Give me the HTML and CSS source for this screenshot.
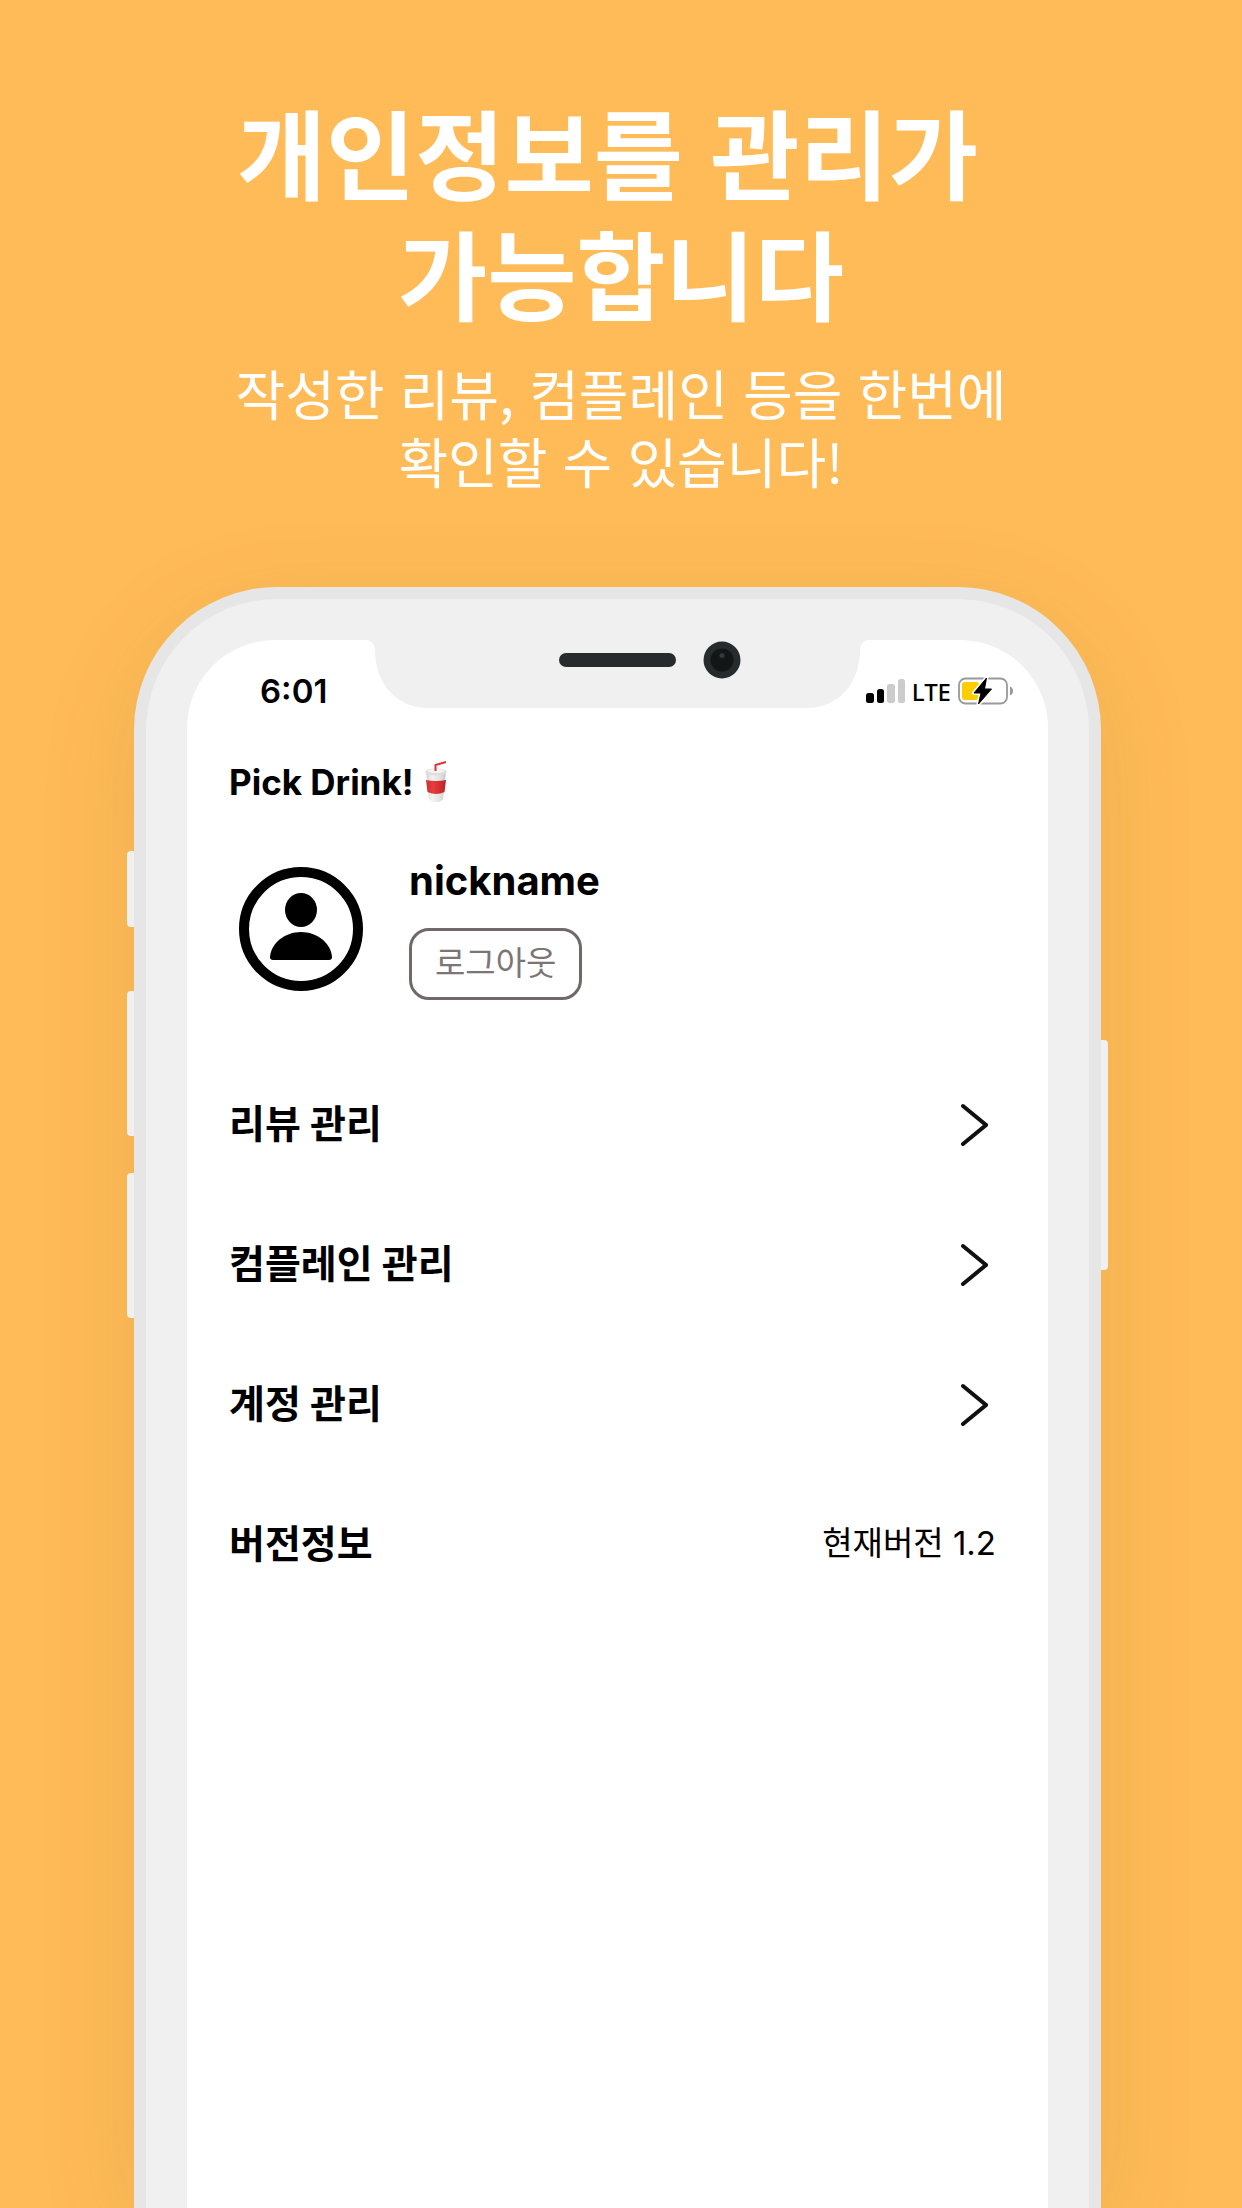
FILE: index.html
```html
<!DOCTYPE html>
<html lang="ko">
<head>
<meta charset="utf-8">
<meta name="viewport" content="width=device-width, initial-scale=1">
<title>Pick Drink!</title>
<link rel="stylesheet" href="styles.css">
</head>
<body>
<header class="promo">
  <h1 class="promo-title">개인정보를 관리가 
가능합니다</h1>
  <p class="promo-text">작성한 리뷰, 컴플레인 등을 한번에
확인할 수 있습니다!</p>
</header>

<main class="phone">
  <span class="side-key key-mute"></span>
  <span class="side-key key-up"></span>
  <span class="side-key key-down"></span>
  <span class="side-key key-power"></span>

  <svg class="notch" width="505" height="69" viewBox="0 0 505 69" aria-hidden="true">
    <path d="M0 0V1C6 1 10 5 10 11C10 45 32 69 63 69H442C473 69 495 45 495 11C495 5 499 1 505 1V0Z" fill="#f0f0f0"/>
    <rect x="194" y="14" width="117" height="14" rx="7" fill="#262b2e"/>
    <circle cx="357" cy="21" r="18.500" fill="#262b2e"/>
    <circle cx="357" cy="21" r="11.500" fill="#121617"/>
    <circle cx="357" cy="16.500" r="2.500" fill="#33383a"/>
  </svg>

  <div class="screen">
    <div class="status">
      <span class="time">6:01</span>
      <div class="status-icons">
        <svg width="39" height="26" viewBox="0 0 39 26" aria-hidden="true">
          <rect x="0" y="15" width="8" height="10" rx="2.500"/>
          <rect x="11" y="11" width="7" height="14" rx="2.500"/>
          <rect x="21" y="6" width="8" height="19" rx="2.500" fill="#ccc"/>
          <rect x="32" y="1" width="7" height="24" rx="2.500" fill="#ccc"/>
        </svg>
        <span class="network">LTE</span>
        <svg width="56" height="28" viewBox="0 0 56 28" aria-hidden="true">
          <rect x="1" y="1.500" width="48" height="25" rx="6.500" fill="none" stroke="#999" stroke-width="1.800"/>
          <path d="M52 9.500C56 11 56 17 52 18.500Z" fill="#999"/>
          <rect x="4" y="5" width="17" height="18" rx="3" fill="#ffcc00"/>
          <path d="M28.500 1L16 16H23L20.500 27L33.500 12H26.500Z" stroke="#fff" stroke-width="4" stroke-linejoin="round"/>
          <path d="M28.500 1L16 16H23L20.500 27L33.500 12H26.500Z" stroke="#000" stroke-width="1" stroke-linejoin="round"/>
        </svg>
      </div>
    </div>

    <div class="brand">
      <h2 class="brand-name">Pick Drink!</h2>
      <svg width="24" height="44" viewBox="0 0 24 44" role="img" aria-label="컵">
        <defs>
          <linearGradient id="cup"><stop offset="0" stop-color="#d2d2d2"/><stop offset=".3" stop-color="#f3f3f3"/><stop offset=".7" stop-color="#e2e2e2"/><stop offset="1" stop-color="#c4c4c4"/></linearGradient>
          <linearGradient id="band"><stop offset="0" stop-color="#cf2f30"/><stop offset=".35" stop-color="#e83c3c"/><stop offset="1" stop-color="#b92328"/></linearGradient>
        </defs>
        <path d="M2 12L5 39C7 43 17 43 19 39L22 12Z" fill="url(#cup)"/>
        <ellipse cx="12" cy="12" rx="11" ry="3.500" fill="#dedede"/>
        <ellipse cx="12" cy="11" rx="8" ry="2" fill="#f4f4f4"/>
        <path d="M2 20Q12 22 22 20L20.500 32Q12 36 3.500 32Z" fill="url(#band)"/>
        <path d="M11.500 11V5L22 2" fill="none" stroke="#db3438" stroke-width="2" stroke-linejoin="round"/>
      </svg>
    </div>

    <section class="profile">
      <svg width="124" height="124" viewBox="0 0 124 124" role="img" aria-label="프로필">
        <circle cx="62" cy="62" r="57" fill="none" stroke="#000" stroke-width="10"/>
        <ellipse cx="62" cy="43" rx="16" ry="17"/>
        <path d="M34 93Q31 93 31 90C32 76 46 65 62 65S92 76 93 90Q93 93 90 93Z"/>
      </svg>
      <div class="profile-info">
        <strong class="nickname">nickname</strong>
        <button class="logout" type="button">로그아웃</button>
      </div>
    </section>

    <nav class="menu">
      <a class="row" href="#reviews"><span class="label">리뷰 관리</span>
        <svg class="chevron" width="28" height="44" viewBox="0 0 28 44" aria-hidden="true"><path d="M3 3L26 22L3 41"/></svg></a>
      <a class="row" href="#complaints"><span class="label">컴플레인 관리</span>
        <svg class="chevron" width="28" height="44" viewBox="0 0 28 44" aria-hidden="true"><path d="M3 3L26 22L3 41"/></svg></a>
      <a class="row" href="#account"><span class="label">계정 관리</span>
        <svg class="chevron" width="28" height="44" viewBox="0 0 28 44" aria-hidden="true"><path d="M3 3L26 22L3 41"/></svg></a>
      <div class="row"><span class="label">버전정보</span> <span class="label version">현재버전 1.2</span></div>
    </nav>
  </div>
</main>
</body>
</html>
```
FILE: styles.css
```css
* {
  box-sizing: border-box;
}

body {
  margin: 0;
  min-height: 100vh;
  display: flex;
  flex-direction: column;
  overflow-x: hidden;
  background: #ffbb57;
  color: #000;
  font-family: Inter, "Noto Sans CJK KR", sans-serif;
}

.promo {
  padding: 89px 0 92px;
  color: #fff;
  text-align: center;
  font-family: "Noto Sans CJK KR", sans-serif;
}

.promo-title,
.promo-text {
  margin: 0;
  white-space: pre;
}

.promo-title {
  font-size: 97px;
  font-weight: 700;
  line-height: 121px;
}

.promo-text {
  margin-top: 28px;
  font-size: 54px;
  font-weight: 400;
  line-height: 68px;
}

/* Device frame, cut off by the bottom of the page */
.phone {
  position: relative;
  flex: 1;
  display: flex;
  margin: 0 141px 0 134px;
  padding: 41px 41px 0;
  border: 12px solid #e6e6e6;
  border-bottom: 0;
  border-radius: 143px 143px 0 0;
  background: #f0f0f0;
  box-shadow: 0 24px 100px rgba(110, 90, 50, 0.12);
}

.side-key {
  position: absolute;
  left: -19px;
  width: 7px;
  height: 145px;
  border-radius: 4px 0 0 4px;
  background: #f0f0f0;
}

.key-mute {
  top: 252px;
  height: 76px;
}

.key-up {
  top: 392px;
}

.key-down {
  top: 574px;
}

.key-power {
  top: 441px;
  right: -19px;
  left: auto;
  height: 230px;
  border-radius: 0 4px 4px 0;
}

.notch {
  position: absolute;
  top: 40px;
  left: 50%;
  margin-left: -253px;
}

.screen {
  flex: 1;
  padding: 27px 34px 0 42px;
  border-radius: 88px 88px 0 0;
  background: #fff;
}

.status {
  display: flex;
  align-items: center;
  justify-content: space-between;
  height: 48px;
  padding-left: 31px;
}

.time {
  font-size: 33px;
  font-weight: 600;
}

.status-icons {
  display: flex;
  align-items: center;
  gap: 7px;
}

.network {
  font: 500 24px "Noto Sans", sans-serif;
}

.brand {
  display: flex;
  align-items: center;
  gap: 10px;
  height: 44px;
  margin-top: 45px;
}

.brand-name {
  margin: 0;
  font-size: 35px;
  font-weight: 700;
}

.profile {
  display: flex;
  gap: 46px;
  margin-top: 63px;
  padding-left: 10px;
}

.profile-info {
  display: flex;
  flex-direction: column;
  align-items: flex-start;
  gap: 33px;
}

.nickname {
  font-size: 40px;
  font-weight: 700;
  line-height: 28px;
}

.logout {
  height: 72px;
  padding: 0 23px 6px;
  border: 3px solid #716868;
  border-radius: 20px;
  background: #fff;
  color: #7d7575;
  font: 400 33px "Noto Sans CJK KR", sans-serif;
}

.menu {
  margin-top: 55px;
  padding-right: 18px;
}

.row {
  display: flex;
  align-items: center;
  justify-content: space-between;
  height: 140px;
  color: #000;
  font-size: 39px;
  font-weight: 700;
  text-decoration: none;
}

.label {
  padding-bottom: 8px;
}

.chevron {
  margin-right: 8px;
  fill: none;
  stroke: #111;
  stroke-width: 4;
  stroke-linecap: round;
}

.version {
  font-size: 33px;
  font-weight: 400;
}
```
